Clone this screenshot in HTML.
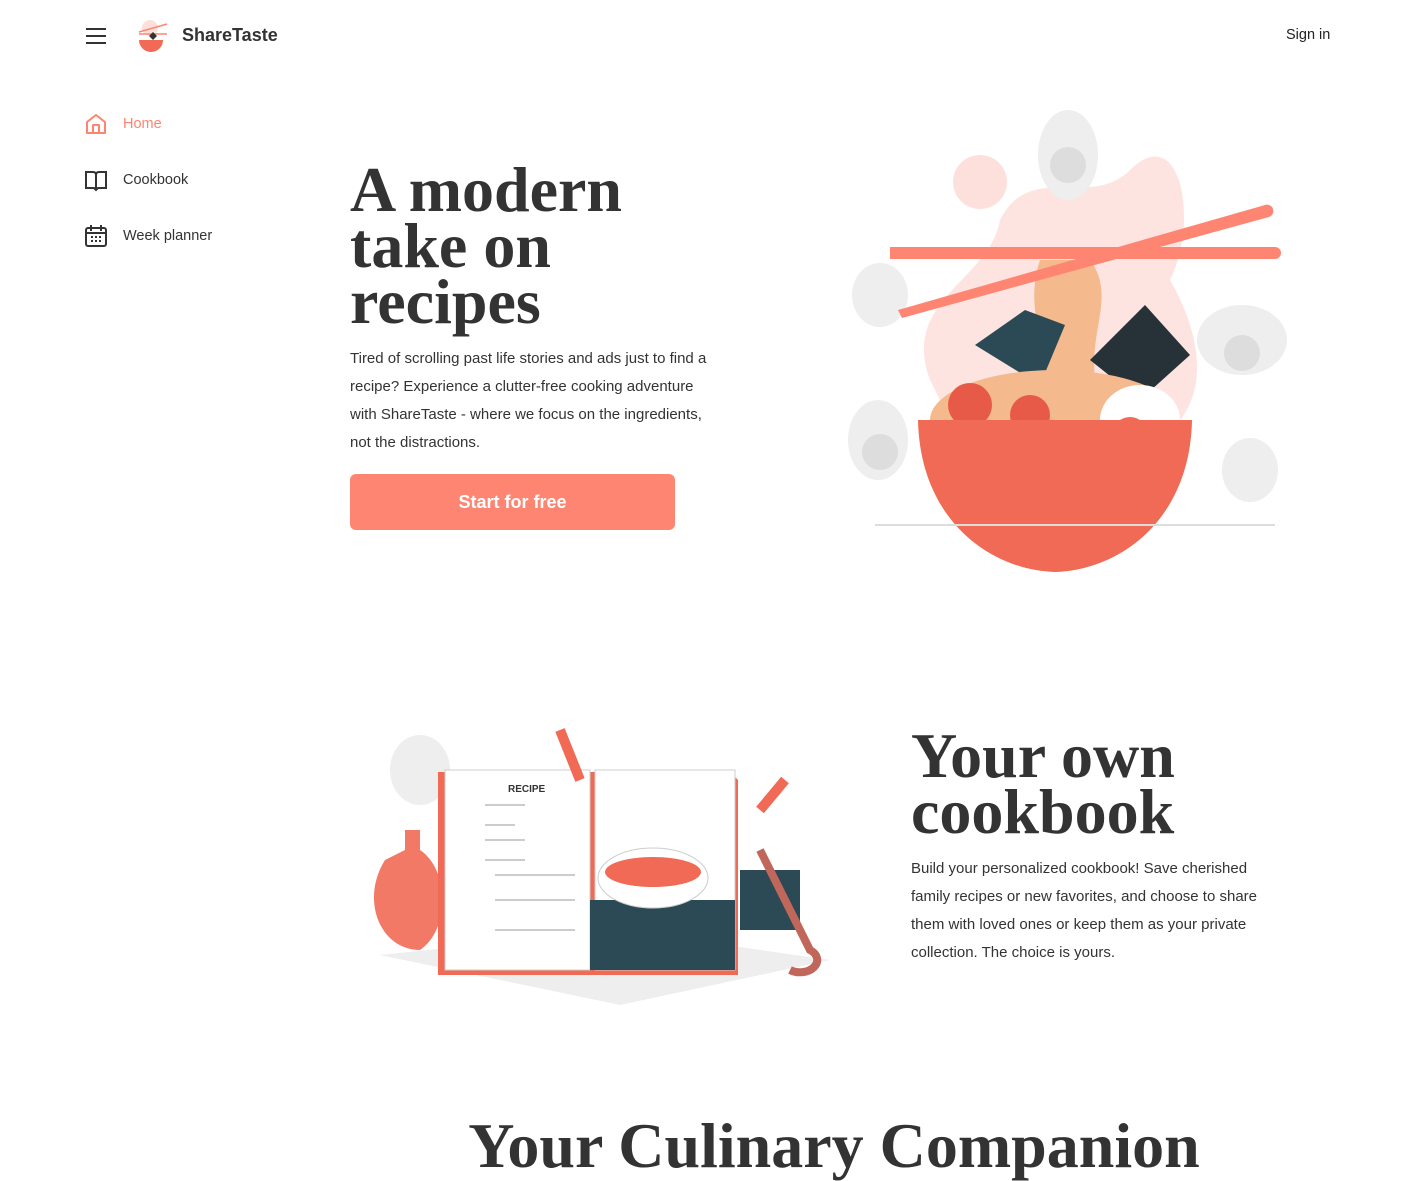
<!DOCTYPE html>
<html><head><meta charset="utf-8"><style>
body{margin:0;width:1428px;height:1177px;overflow:hidden;background:#fff;font-family:"Liberation Sans",sans-serif;color:#333;position:relative}
.a{position:absolute}
.nav{font-size:14.5px;color:#333}
h1,h2{margin:0;font-family:"Liberation Serif",serif;font-weight:bold;color:#333;font-size:64px;line-height:56px;position:absolute}
p{margin:0;position:absolute;font-size:15px;line-height:28px;color:#333;white-space:nowrap}
</style></head><body>
<svg class="a" style="left:85px;top:27px" width="22" height="18"><path d="M1 2h20M1 9h20M1 16h20" stroke="#333" stroke-width="2"/></svg>
<svg class="a" style="left:135px;top:18px" width="36" height="38"><ellipse cx="15" cy="10" rx="8" ry="8" fill="#fde0dc"/><path d="M4 14l28-8M4 16h28" stroke="#fe8572" stroke-width="1.5"/><path d="M4 22h24a12 12 0 0 1-24 0z" fill="#f06a55"/><path d="M18 14l4 4-4 4-4-4z" fill="#333"/></svg>
<div class="a" style="left:182px;top:25px;font-size:18px;font-weight:bold;color:#333">ShareTaste</div>
<div class="a" style="left:1286px;top:27px;font-size:14.5px;color:#222">Sign in</div>

<svg class="a" style="left:85px;top:113px" width="22" height="22"><path d="M2 9L11 2l9 7v11H2z M8 20v-8h6v8" fill="none" stroke="#fe8572" stroke-width="2" stroke-linejoin="round"/></svg>
<div class="a nav" style="left:123px;top:116px;color:#fe8572">Home</div>
<svg class="a" style="left:85px;top:170px" width="22" height="22"><path d="M1 2h7q3 0 3 3 0-3 3-3h7v16h-8l-2 2-2-2H1z M11 5v14" fill="none" stroke="#333" stroke-width="2"/></svg>
<div class="a nav" style="left:123px;top:172px">Cookbook</div>
<svg class="a" style="left:85px;top:225px" width="22" height="22"><rect x="1" y="3" width="20" height="18" rx="2" fill="none" stroke="#333" stroke-width="2"/><path d="M6 0v6M16 0v6M1 8h20" stroke="#333" stroke-width="2"/><path d="M6 12h2M10 12h2M14 12h2M6 16h2M10 16h2M14 16h2" stroke="#333" stroke-width="2"/></svg>
<div class="a nav" style="left:123px;top:228px">Week planner</div>

<h1 style="left:350px;top:162px">A modern<br>take on<br>recipes</h1>
<p style="left:350px;top:345px">Tired of scrolling past life stories and ads just to find a<br>recipe? Experience a clutter-free cooking adventure<br>with ShareTaste - where we focus on the ingredients,<br>not the distractions.</p>
<div class="a" style="left:350px;top:474px;width:325px;height:56px;background:#fe8572;border-radius:6px;color:#fff;font-weight:bold;font-size:18px;text-align:center;line-height:56px">Start for free</div>

<svg class="a" style="left:840px;top:100px" width="460" height="480">
<path d="M90 280 C60 200 150 180 160 120 C190 60 250 110 290 70 C340 20 360 120 330 180 C370 250 370 320 300 350 L130 360Z" fill="#fde4e1"/>
<circle cx="140" cy="82" r="27" fill="#fde0dc"/>
<ellipse cx="228" cy="55" rx="30" ry="45" fill="#eee"/><circle cx="228" cy="65" r="18" fill="#ddd"/>
<ellipse cx="40" cy="195" rx="28" ry="32" fill="#eee"/><ellipse cx="38" cy="340" rx="30" ry="40" fill="#eee"/><circle cx="40" cy="352" r="18" fill="#ddd"/>
<ellipse cx="402" cy="240" rx="45" ry="35" fill="#eee"/><circle cx="402" cy="253" r="18" fill="#ddd"/>
<ellipse cx="410" cy="370" rx="28" ry="32" fill="#eee"/>
<path d="M200 160 C180 220 220 260 200 300 L260 300 C240 240 280 200 250 160Z" fill="#f5b98e"/>
<path d="M135 245 l50-35 40 15-25 60z" fill="#2c4a55"/>
<path d="M250 260 l55-55 45 50-50 45z" fill="#263238"/>
<path d="M50 147 H435 a6 6 0 0 1 0 12 H50z" fill="#fe8572"/>
<path d="M58 210 L425 105 a6 6 0 0 1 4 12 L62 218z" fill="#fe8572"/>
<ellipse cx="215" cy="320" rx="125" ry="50" fill="#f5b98e"/>
<circle cx="130" cy="305" r="22" fill="#e85a48"/><circle cx="190" cy="315" r="20" fill="#e85a48"/>
<ellipse cx="300" cy="320" rx="40" ry="35" fill="#fff"/><circle cx="290" cy="335" r="18" fill="#f06a55"/>
<path d="M78 320 H352 C350 420 280 470 215 472 C150 470 80 420 78 320Z" fill="#f06a55"/>
<path d="M35 425 H435" stroke="#ddd" stroke-width="2"/>
</svg>

<svg class="a" style="left:360px;top:700px" width="480" height="310">
<path d="M20 255 L260 305 L470 260 L260 230Z" fill="#eee"/>
<ellipse cx="60" cy="70" rx="30" ry="35" fill="#eee"/>
<path d="M45 130 L60 130 L60 150 C90 170 90 230 60 250 C20 250 0 200 25 160 L45 150Z" fill="#f06a55" opacity=".9"/>
<path d="M78 72 H232 L240 80 V275 H78Z" fill="#f06a55"/>
<path d="M232 72 H370 L378 80 V275 H232Z" fill="#f06a55"/>
<path d="M85 70 H230 V270 H85Z" fill="#fff" stroke="#ccc"/>
<path d="M235 70 H375 V270 H235Z" fill="#fff" stroke="#ccc"/>
<path d="M230 200 H375 V270 H230Z" fill="#2c4a55"/>
<text x="148" y="92" font-family="Liberation Sans" font-size="10" font-weight="bold" fill="#333">RECIPE</text>
<path d="M125 105h40M125 125h30M125 140h40M125 160h40M135 175h80M135 200h80M135 230h80" stroke="#ccc" stroke-width="2"/>
<ellipse cx="293" cy="178" rx="55" ry="30" fill="#fff" stroke="#ccc"/><ellipse cx="293" cy="172" rx="48" ry="15" fill="#f06a55"/>
<path d="M380 170 h60 v60 h-60z" fill="#2c4a55"/>
<path d="M400 150 L450 250 a14 10 0 0 1 -20 20" stroke="#c0665a" stroke-width="8" fill="none"/>
<path d="M200 30 l20 50 M400 110 l25-30" stroke="#f06a55" stroke-width="10"/>
</svg>

<h2 style="left:911px;top:728px">Your own<br>cookbook</h2>
<p style="left:911px;top:855px">Build your personalized cookbook! Save cherished<br>family recipes or new favorites, and choose to share<br>them with loved ones or keep them as your private<br>collection. The choice is yours.</p>
<h2 style="left:0;width:1668px;text-align:center;top:1118px">Your Culinary Companion</h2>
</body></html>
